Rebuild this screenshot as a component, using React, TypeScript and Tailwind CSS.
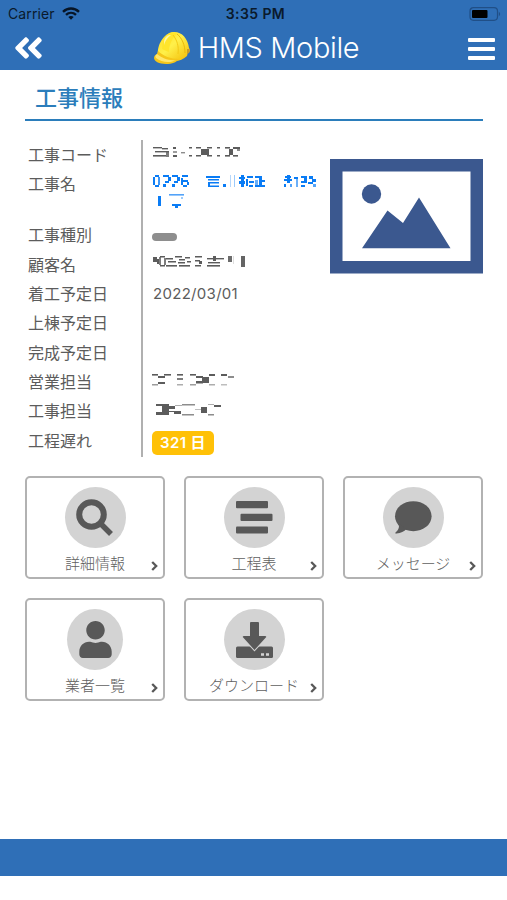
import type { ReactNode } from 'react'
import { FaAngleDoubleLeft, FaUser } from 'react-icons/fa'

type Cell = [x: number, y: number, w: number, h: number, opacity?: number]

// Censored values, drawn as blocks
const CODE: Cell[] = [
  [0, 1, 9, 1.4], [9, 2, 6, 1.4], [2, 5, 14, 1.4], [0, 9, 13, 1.6], [13, 5, 3, 6, 0.8],
  [20, 1, 3, 2], [20, 5, 4, 2, 0.6], [20, 9, 4, 2], [28, 6, 4, 1.4, 0.7],
  [36, 1, 3, 1.5], [36, 9, 3, 1.5], [43, 1, 5, 1.5], [43, 9, 5, 1.5], [48, 3, 8, 6], [54, 1, 5, 1.5], [54, 9, 5, 1.5],
  [64, 1, 3, 1.5], [64, 9, 3, 1.5], [72, 1, 5, 1.6], [76, 3, 4, 6], [72, 9, 5, 1.6], [80, 1, 7, 2], [80, 9, 5, 1.6], [84, 2, 3, 3, 0.7],
]

const NAME: Cell[] = [
  [0, 2, 2, 8], [2, 0, 4, 2], [5, 2, 2, 8, 0.8], [2, 10, 4, 2],
  [10, 0, 6, 2], [15, 2, 3, 4], [12, 6, 4, 2], [10, 9, 3, 3],
  [19, 0, 6, 2], [24, 2, 3, 4], [21, 6, 4, 2], [19, 9, 3, 3],
  [29, 0, 6, 2], [28, 3, 2, 7], [30, 5, 5, 2], [34, 7, 2, 3], [30, 10, 4, 2],
  [53, 1, 14, 2], [55, 4, 11, 1.5], [55, 7, 2, 5], [57, 7, 9, 1.5], [57, 10.5, 9, 1.5],
  [70, 9, 3, 3], [77, 0, 1, 12, 0.3], [81, 0, 1, 12, 0.4],
  [86, 2, 6, 2], [88, 0, 3, 12], [86, 6, 6, 3], [94, 1, 6, 2], [93, 4, 2, 7], [96, 6, 5, 2], [96, 10, 4, 2],
  [102, 1, 7, 2], [102, 5, 3, 6, 0.6], [106, 1, 3, 10], [106, 5, 6, 2], [102, 10, 10, 2],
  [132, 1, 6, 2], [131, 4, 8, 2], [134, 0, 3, 8], [131, 9, 2, 3], [137, 9, 2, 3, 0.7],
  [141, 2, 4, 2], [143, 4, 2, 8, 0.6], [148, 1, 6, 2], [151, 3, 3, 5], [148, 6, 6, 2], [148, 10, 4, 2],
  [156, 1, 4, 3], [159, 4, 4, 3], [155, 7, 5, 2], [160, 9, 3, 3, 0.7],
  [5, 21, 3, 10], [16, 19, 15, 1.6, 0.7], [28, 22, 2, 2, 0.4], [19, 29, 9, 2], [22, 30, 3, 3],
]

const CUSTOMER: Cell[] = [
  [0, 2, 4, 5], [4, 4, 2, 5], [7, 1, 5, 1.5], [6, 2, 2, 8, 0.8], [11, 3, 2, 7, 0.8], [7, 10, 5, 1.5],
  [13, 3, 7, 1.5], [15, 6, 8, 1.5], [13, 10, 11, 1.6], [22, 1, 7, 1.5], [26, 4, 6, 1.5], [25, 7, 7, 1.5], [26, 10, 11, 1.6], [32, 2, 5, 1.5], [34, 6, 4, 1.5],
  [42, 1, 7, 1.5], [42, 5, 5, 1.5], [46, 6, 3, 3], [42, 10, 6, 1.5],
  [54, 3, 17, 1.4], [60, 1, 3, 5], [55, 7, 12, 1.4], [54, 10, 13, 1.6], [75, 1, 4, 6, 0.9], [80, 1, 1, 8, 0.2], [88, 1, 4, 11, 0.95],
]

const SALES: Cell[] = [
  [0, 1, 6, 1.6], [12, 1, 7, 1.6], [6, 3, 7, 2], [6, 9, 7, 2], [0, 11, 6, 1.5, 0.6],
  [25, 1, 6, 1.6], [25, 5, 6, 2, 0.8], [25, 11, 6, 1.5, 0.5],
  [38, 1, 6, 1.6], [44, 3, 7, 2], [50, 4, 7, 6], [44, 8, 7, 2.5], [38, 11, 6, 1.5, 0.6], [57, 1, 6, 2], [57, 11, 6, 1.5, 0.5],
  [69, 1, 6, 2], [76, 3, 6, 2, 0.7], [69, 11, 6, 1.5, 0.4],
]

const MANAGER: Cell[] = [
  [4, 1, 13, 2], [10, 3, 13, 3], [10, 6, 7, 3], [4, 9, 13, 3], [17, 8, 6, 1], [22, 8, 7, 3], [23, 2, 7, 1, 0.5], [30, 1, 13, 1.5, 0.7], [30, 11, 12, 1.5, 0.7],
  [43, 6, 6, 1, 0.4], [49, 4, 6, 6], [56, 1, 6, 1, 0.5], [62, 2, 7, 2], [56, 11, 6, 1.5, 0.7],
]

function Mosaic({ cells, width, height }: { cells: Cell[]; width: number; height: number }) {
  return (
    <svg width={width} height={height} fill="currentColor" className="block">
      {cells.map(([x, y, w, h, opacity], i) => (
        <rect key={i} x={x} y={y} width={w} height={h} opacity={opacity ?? 1} />
      ))}
    </svg>
  )
}

function Row({ label, tall, children }: { label: string; tall?: boolean; children?: ReactNode }) {
  return (
    <div className={tall ? 'flex h-[51px]' : 'flex h-[29.35px]'}>
      <div className="w-[114px] shrink-0 pl-[3px] text-[16px] leading-[30px]">{label}</div>
      <div className="pl-[13px] text-[15px] leading-[29px]">{children}</div>
    </div>
  )
}

function Card({ label, narrow, children }: { label: string; narrow?: boolean; children: ReactNode }) {
  return (
    <button className="relative flex h-[103px] flex-col items-center rounded-[5px] border-2 border-[#b2b2b2] pt-[9px] text-[#585858]">
      <span className={`flex h-[61px] items-center justify-center rounded-[50%] bg-[#d3d3d3] ${narrow ? 'w-[56px]' : 'w-[61px]'}`}>
        {children}
      </span>
      <span className="mt-[5px] text-[15px] font-light leading-[22px] text-[#606060]">{label}</span>
      <svg width="7" height="10" viewBox="0 0 7 10" className="absolute right-[5px] bottom-[6px]" fill="none" stroke="currentColor" strokeWidth="2.3">
        <path d="M1.2 1 5.2 5 1.2 9" />
      </svg>
    </button>
  )
}

function Helmet() {
  return (
    <svg width="38" height="34" viewBox="0 0 38 34">
      <defs>
        <linearGradient id="shell" x1="0" y1="0" x2="1" y2="1">
          <stop offset="0" stopColor="#ffd91f" />
          <stop offset="0.45" stopColor="#fff04a" />
          <stop offset="1" stopColor="#f2b800" />
        </linearGradient>
      </defs>
      <path d="M5 23C4 14 11 2 20 1c8-1 15 6 16 16l1 2-1 3-1-1-1 4c-3 3-8 5-12 5z" fill="url(#shell)" />
      <path d="M34 18l3 0-1 4-2 1z" fill="#c99b28" />
      <path d="M5 20c5 5 13 8 21 8-2 3-7 5-13 5C6 33 1 30 1 27c0-2 1-3 3-4z" fill="#f5c61a" />
      <path d="M4 23c5 4 12 7 19 6-5 3-14 3-20-2-1-1-1-3 1-4z" fill="#ffe66d" />
      <path d="M15 3c3-2 7-2 9 0-5 4-8 11-8 18-3-1-5-2-7-3 0-6 2-11 6-15z" fill="#ffe52c" />
      <path d="M13 6c2-2 3-2 5-2-4 3-6 6-7 10 0-4 0-6 2-8z" fill="#fff6a0" />
      <path d="M24 3c5 4 8 11 8 19" fill="none" stroke="#e8b90b" strokeWidth="1" />
      <path d="M20 4c4 5 6 11 5 19" fill="none" stroke="#f3ca16" strokeWidth="1" />
    </svg>
  )
}

export default function App() {
  return (
    <div className="flex h-[900px] w-[507px] flex-col overflow-hidden bg-white font-['Inter','Noto_Sans_CJK_JP',sans-serif] text-[#5c5c5c]">
      <header className="h-[70px] shrink-0 bg-[#2f6fb7]">
        {/* Status bar */}
        <div className="grid h-[27px] grid-cols-3 items-center pr-[6px] pl-[8px] text-[#0a1a2c]">
          <div className="flex items-center gap-[7px]">
            <span className="text-[14px] tracking-[0.1px]">Carrier</span>
            <svg width="18" height="13" viewBox="0 0 18 13" fill="none" stroke="#071526" strokeWidth="2.4">
              <path d="M1 4.8c4.6-4.4 11.4-4.4 16 0" />
              <path d="M4 7.9c2.9-2.7 7.100-2.700 10 0" />
              <path d="M6.300 10 9 12.700 11.700 10c-1.500-1.400-3.900-1.400-5.400 0z" fill="#071526" stroke="none" />
            </svg>
          </div>
          <div className="pl-[2px] text-center text-[14px] font-semibold tracking-[0.4px] whitespace-nowrap">3:35 PM</div>
          <svg width="33" height="14" viewBox="0 0 33 14" className="justify-self-end">
            <rect x="2" y="0.7" width="27.5" height="12.6" rx="3.5" fill="none" stroke="#204f87" strokeWidth="1.2" />
            <rect x="4" y="3" width="15.5" height="8" rx="1" fill="#000" />
            <path d="M30.8 4.8c1.800.8 1.800 3.600 0 4.400z" fill="#204f87" />
          </svg>
        </div>
        <div className="flex h-[43px] items-center justify-between pr-[12px] pl-[13px] text-white">
          <FaAngleDoubleLeft className="-mt-px h-[34px] w-[31px]" />
          <div className="-mt-px flex items-center gap-[7px]">
            <Helmet />
            <span className="text-[29px] leading-[34px] font-light tracking-[-0.35px]">HMS Mobile</span>
          </div>
          <div className="flex w-[27px] flex-col gap-[5px]">
            <span className="h-[4px] rounded-[1px] bg-white" />
            <span className="h-[4px] rounded-[1px] bg-white" />
            <span className="h-[4px] rounded-[1px] bg-white" />
          </div>
        </div>
      </header>

      <main className="grow pr-[24px] pl-[25px]">
        <h1 className="h-[51px] border-b-2 border-[#2b7dbb] pt-[12px] pl-[10px] text-[22px] leading-[33px] font-medium text-[#2b7dbb]">工事情報</h1>

        <div className="mt-[19px] flex h-[317px] justify-between">
          <div className="relative w-[305px]">
            <div className="absolute top-0 left-[116px] h-[317px] w-[2px] bg-[#b0b0b0]" />
            <Row label="工事コード">
              <div className="pt-[6px] pl-px"><Mosaic cells={CODE} width={90} height={13} /></div>
            </Row>
            <Row label="工事名" tall>
              <div className="pt-[6px] pl-px text-[#0a7cf5]"><Mosaic cells={NAME} width={165} height={34} /></div>
            </Row>
            <Row label="工事種別">
              <div className="mt-[13px] h-[8px] w-[25px] rounded-full bg-[#8e8e8e]" />
            </Row>
            <Row label="顧客名">
              <div className="pt-[5px] pl-px"><Mosaic cells={CUSTOMER} width={94} height={14} /></div>
            </Row>
            <Row label="着工予定日">
              <span className="pl-px tracking-[0.3px]">2022/03/01</span>
            </Row>
            <Row label="上棟予定日" />
            <Row label="完成予定日" />
            <Row label="営業担当">
              <div className="pt-[6px]"><Mosaic cells={SALES} width={84} height={14} /></div>
            </Row>
            <Row label="工事担当">
              <div className="pt-[7px]"><Mosaic cells={MANAGER} width={72} height={14} /></div>
            </Row>
            <Row label="工程遅れ">
              <div className="mt-[5px] flex h-[24px] w-[62px] items-center justify-center rounded-[5px] bg-[#ffc107] text-[15px] font-semibold tracking-[0.4px] whitespace-pre text-white">321 日</div>
            </Row>
          </div>
          <svg width="153" height="115" viewBox="0 0 153 115" className="mt-[19px] shrink-0" fill="#3b588f">
            <path d="M0 0h153v114.500H0zM12.500 12.500v89.500h128V12.500z" fillRule="evenodd" />
            <circle cx="41.500" cy="35" r="9.700" />
            <path d="M32 89.200 57.500 51.500 73 64 89 38.500 120.500 89.200z" />
          </svg>
        </div>

        <div className="mt-[19px] grid grid-cols-3 gap-[19px]">
          <Card label="詳細情報">
            <svg width="38" height="38" viewBox="0 0 38 38" fill="none" stroke="currentColor">
              <circle cx="15.500" cy="15.500" r="12.300" strokeWidth="6" />
              <path d="M24 24l11 11" strokeWidth="5.500" strokeLinejoin="round" />
            </svg>
          </Card>
          <Card label="工程表">
            <svg width="37" height="33" viewBox="0 0 37 33" fill="currentColor">
              <rect x="0" y="0" width="32" height="7.200" rx="1" />
              <rect x="4.500" y="12.700" width="32" height="7.200" rx="1" />
              <rect x="0" y="25.400" width="32" height="7.200" rx="1" />
            </svg>
          </Card>
          <Card label="メッセージ">
            <svg width="38" height="33" viewBox="0 0 38 33" fill="currentColor">
              <ellipse cx="19.300" cy="15.200" rx="18.300" ry="15" />
              <path d="M3.500 22c3 3 1 7-2 9.500-.5 1 .2 1.300 1 1.100 4.500-.6 7.500-2.200 10-4.600z" />
            </svg>
          </Card>
          <Card label="業者一覧" narrow>
            <FaUser className="h-[37px] w-[33px]" />
          </Card>
          <Card label="ダウンロード">
            <svg width="37" height="38" viewBox="0 0 37 38">
              <path d="M1.500 25.500h34q1.500 0 1.500 1.500v8.500q0 1.500-1.500 1.500h-34Q0 37 0 35.500V27q0-1.500 1.500-1.500z" fill="currentColor" />
              <path d="M14 2q0-1 1-1h7q1 0 1 1v13h6q2 0 .8 1.600L18.500 29 7.200 16.600Q6 15 8 15h6z" fill="currentColor" stroke="#d3d3d3" strokeWidth="2" paintOrder="stroke" />
              <path d="M25 32.200h3v2.500h-3zM30 32.200h3v2.500h-3z" fill="#d3d3d3" />
            </svg>
          </Card>
        </div>
      </main>

      <footer className="mb-[24px] h-[37px] shrink-0 bg-[#2f6fb7]" />
    </div>
  )
}
